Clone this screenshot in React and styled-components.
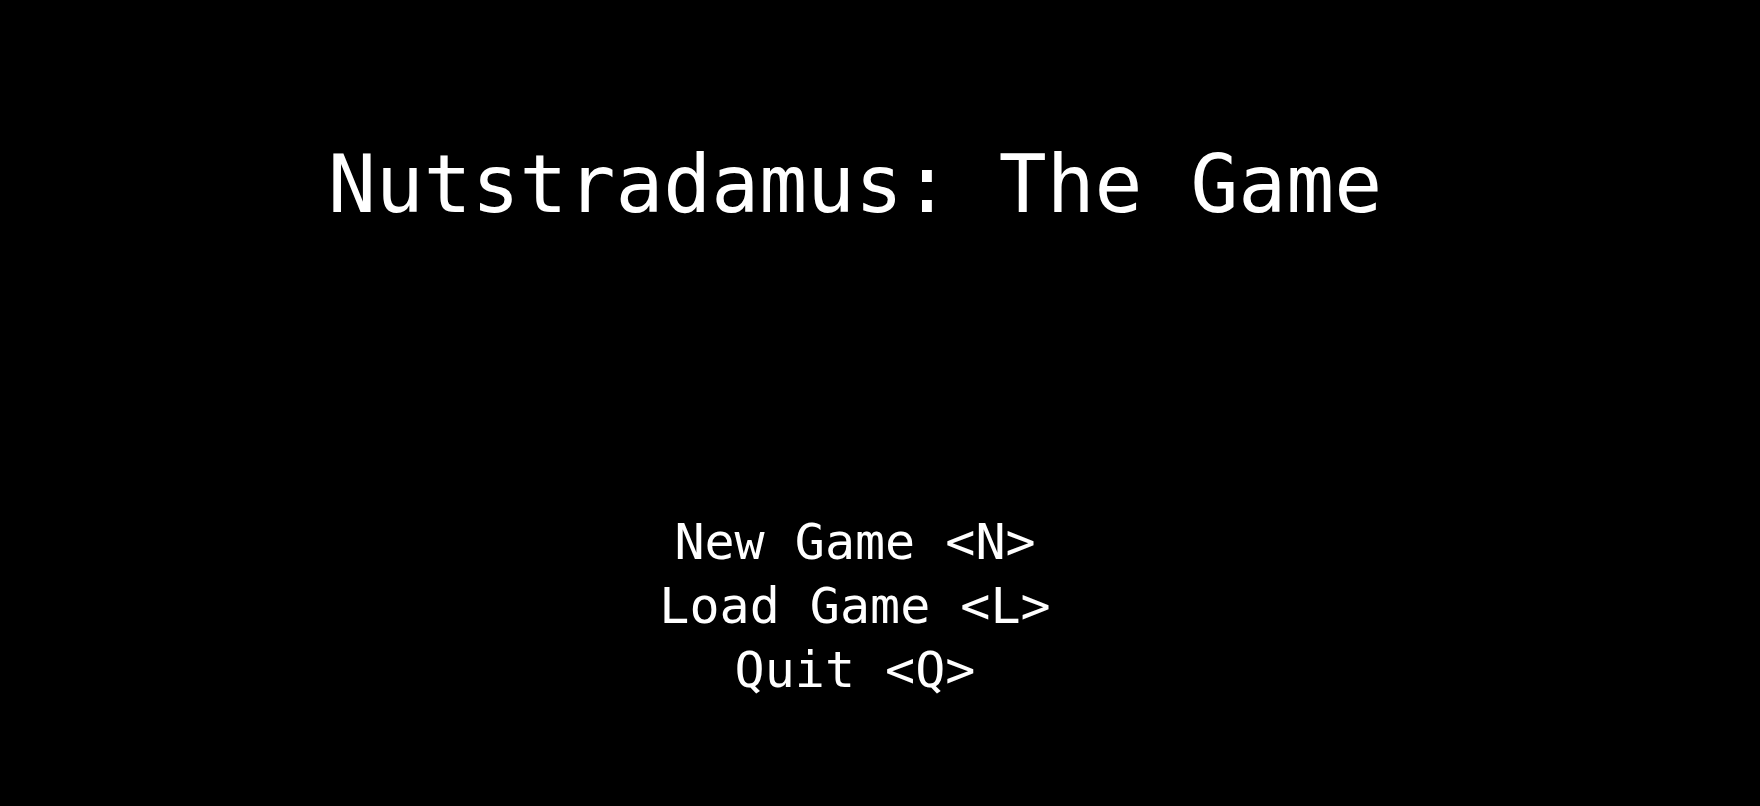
import React from "react";
import styled, { createGlobalStyle } from "styled-components";

const Global = createGlobalStyle`
  html, body { margin: 0; padding: 0; background: #000; }
  body { font-family: "DejaVu Sans Mono", monospace; color: #fff; }
`;

const Screen = styled.div`
  width: 1710px;
  height: 806px;
  background: #000;
  display: flex;
  flex-direction: column;
  align-items: center;
  padding-top: 145px;
  box-sizing: border-box;
`;

const Title = styled.h1`
  margin: 0;
  font-family: "DejaVu Sans Mono", monospace;
  font-weight: normal;
  font-size: 79.6px;
  line-height: 80px;
  color: #fff;
  white-space: pre;
`;

const Menu = styled.div`
  margin-top: 285px;
  display: flex;
  flex-direction: column;
  align-items: center;
`;

const Item = styled.div`
  font-family: "DejaVu Sans Mono", monospace;
  font-size: 50px;
  line-height: 64px;
  color: #fff;
  white-space: pre;
`;

export default function App() {
  return (
    <>
      <Global />
      <Screen>
        <Title>Nutstradamus: The Game</Title>
        <Menu>
          <Item>New Game &lt;N&gt;</Item>
          <Item>Load Game &lt;L&gt;</Item>
          <Item>Quit &lt;Q&gt;</Item>
        </Menu>
      </Screen>
    </>
  );
}
